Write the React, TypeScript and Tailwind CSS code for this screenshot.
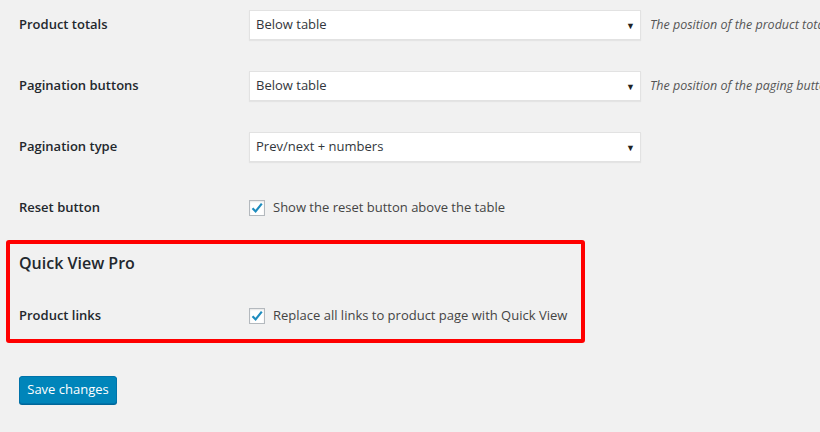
import React from "react";

const font = { fontFamily: '"Open Sans", "Noto Sans", sans-serif' };

function Select({ value }: { value: string }) {
  return (
    <div className="relative flex h-[30px] w-[392px] shrink-0 items-center border border-[#e2e2e2] bg-white pl-[6px] text-[13px] text-[#32373c] shadow-[0_1px_1px_rgba(0,0,0,0.05)]">
      <span>{value}</span>
      <span className="absolute right-[5px] top-[8px] text-[9px] text-[#222]">▼</span>
    </div>
  );
}

function Check() {
  return (
    <div className="flex h-[16px] w-[16px] shrink-0 items-center justify-center border border-[#b4b9be] bg-white shadow-[inset_0_1px_2px_rgba(0,0,0,0.1)]">
      <svg width="14" height="14" viewBox="0 0 14 14">
        <path d="M2.5 7.2 L5.6 10.4 L11.8 2.6" fill="none" stroke="#1e8cbe" strokeWidth="2.2" />
      </svg>
    </div>
  );
}

function Row({ label, children }: { label: string; children: React.ReactNode }) {
  return (
    <div className="flex h-[30px] items-center">
      <div className="w-[230px] shrink-0 text-[13px] font-semibold text-[#23282d]">{label}</div>
      {children}
    </div>
  );
}

export default function App() {
  return (
    <div className="h-[432px] w-[820px] overflow-hidden bg-[#f1f1f1]" style={font}>
      <div className="flex flex-col pl-[19px] pt-[10px]">
        <Row label="Product totals">
          <Select value="Below table" />
          <span className="ml-[9px] shrink-0 whitespace-nowrap text-[12.5px] italic text-[#555]">The position of the product totals</span>
        </Row>
        <div className="h-[31px]" />
        <Row label="Pagination buttons">
          <Select value="Below table" />
          <span className="ml-[9px] shrink-0 whitespace-nowrap text-[12.5px] italic text-[#555]">The position of the paging buttons</span>
        </Row>
        <div className="h-[31px]" />
        <Row label="Pagination type">
          <Select value="Prev/next + numbers" />
        </Row>
        <div className="h-[31px]" />
        <Row label="Reset button">
          <div className="flex items-center gap-[8px] text-[13px] text-[#444]">
            <Check />
            <span>Show the reset button above the table</span>
          </div>
        </Row>
        <div className="ml-[-13px] mt-[17px] w-[579px] rounded-[3px] border-4 border-[#f00] pb-[8px] pl-[9px] pt-[9px]">
          <div className="flex h-[20px] items-center text-[16px] font-semibold text-[#23282d]">Quick View Pro</div>
          <div className="h-[28px]" />
          <Row label="Product links">
            <div className="flex items-center gap-[8px] text-[13px] text-[#444]">
              <Check />
              <span>Replace all links to product page with Quick View</span>
            </div>
          </Row>
        </div>
        <div className="mt-[33px]">
          <button className="flex h-[28px] w-[98px] items-center justify-center rounded-[3px] border border-[#0073aa] bg-[#0085ba] text-[13px] text-white shadow-[0_1px_0_#006799]">
            Save changes
          </button>
        </div>
      </div>
    </div>
  );
}
